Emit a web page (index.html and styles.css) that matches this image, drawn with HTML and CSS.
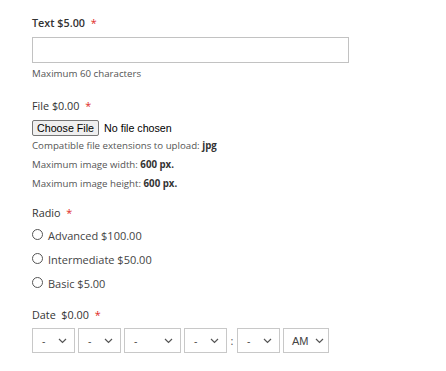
FILE: index.html
```html
<!DOCTYPE html>
<html>
<head>
<meta charset="utf-8">
<link rel="stylesheet" href="styles.css">
</head>
<body>
<div class="form">
  <div class="field">
    <div class="label strong">Text $5.00 <span class="req">*</span></div>
    <div class="input"></div>
    <div class="note">Maximum 60 characters</div>
  </div>

  <div class="field field-file">
    <div class="label">File $0.00 <span class="req">*</span></div>
    <div class="file-row">
      <span class="file-btn">Choose File</span>
      <span class="file-name">No file chosen</span>
    </div>
    <div class="note tall">Compatible file extensions to upload: <b>jpg</b></div>
    <div class="note tall">Maximum image width: <b>600 px.</b></div>
    <div class="note tall">Maximum image height: <b>600 px.</b></div>
  </div>

  <div class="field field-radio">
    <div class="label">Radio <span class="req">*</span></div>
    <div class="options">
      <label class="option"><span class="radio"></span>Advanced $100.00</label>
      <label class="option"><span class="radio"></span>Intermediate $50.00</label>
      <label class="option"><span class="radio"></span>Basic $5.00</label>
    </div>
  </div>

  <div class="field field-date">
    <div class="label">Date&nbsp; $0.00 <span class="req">*</span></div>
    <div class="selects">
      <div class="select w43"><span>-</span><svg width="9" height="6" viewBox="0 0 9 6"><path d="M1 1 L4.5 4.5 L8 1" fill="none" stroke="#555" stroke-width="1.2"/></svg></div>
      <div class="select w43"><span>-</span><svg width="9" height="6" viewBox="0 0 9 6"><path d="M1 1 L4.5 4.5 L8 1" fill="none" stroke="#555" stroke-width="1.2"/></svg></div>
      <div class="select w56"><span>-</span><svg width="9" height="6" viewBox="0 0 9 6"><path d="M1 1 L4.5 4.5 L8 1" fill="none" stroke="#555" stroke-width="1.2"/></svg></div>
      <div class="select w43"><span>-</span><svg width="9" height="6" viewBox="0 0 9 6"><path d="M1 1 L4.5 4.5 L8 1" fill="none" stroke="#555" stroke-width="1.2"/></svg></div>
      <span class="colon">:</span>
      <div class="select w43"><span>-</span><svg width="9" height="6" viewBox="0 0 9 6"><path d="M1 1 L4.5 4.5 L8 1" fill="none" stroke="#555" stroke-width="1.2"/></svg></div>
      <div class="select ampm"><span>AM</span><svg width="9" height="6" viewBox="0 0 9 6"><path d="M1 1 L4.5 4.5 L8 1" fill="none" stroke="#555" stroke-width="1.2"/></svg></div>
    </div>
  </div>
</div>
</body>
</html>
```

FILE: styles.css
```css
html, body {
  margin: 0;
  padding: 0;
  background: #fff;
}
body {
  font-family: "Open Sans", "Noto Sans", sans-serif;
  color: #333;
}
.form {
  padding: 16px 0 0 32px;
  display: flex;
  flex-direction: column;
}
.field {
  display: flex;
  flex-direction: column;
  align-items: flex-start;
}
.label {
  font-size: 10.8px;
  line-height: 14px;
  height: 14px;
  color: #333;
  white-space: nowrap;
}
.label.strong {
  font-weight: 600;
}
.req {
  color: #e02b27;
  margin-left: 3px;
  font-weight: 400;
}
.input {
  margin-top: 7px;
  width: 315px;
  height: 24px;
  border: 1px solid #c2c2c2;
  background: #fff;
}
.note {
  margin-top: 4px;
  font-size: 9.7px;
  line-height: 14px;
  color: #555;
  white-space: nowrap;
}
.note b {
  font-weight: 700;
  color: #333;
}
.note.tall {
  margin-top: 0;
  line-height: 19px;
}
.field-file {
  margin-top: 18px;
}
.file-row {
  margin-top: 7px;
  display: flex;
  align-items: center;
  height: 16px;
}
.file-btn {
  font-family: "Liberation Sans", Arial, sans-serif;
  font-size: 10.7px;
  line-height: 14px;
  color: #000;
  background: #efefef;
  border: 1px solid #767676;
  border-radius: 2px;
  padding: 0 4px;
  height: 14px;
  display: flex;
  align-items: center;
}
.file-name {
  font-family: "Liberation Sans", Arial, sans-serif;
  font-size: 10.7px;
  color: #000;
  margin-left: 5px;
}
.field-radio {
  margin-top: 13px;
}
.options {
  margin-top: 3px;
  display: flex;
  flex-direction: column;
}
.option {
  display: flex;
  align-items: center;
  height: 24px;
  font-size: 11px;
  color: #444;
}
.radio {
  width: 9px;
  height: 9px;
  border: 1px solid #555;
  border-radius: 50%;
  margin-right: 5px;
  margin-top: -1px;
  flex: none;
}
.field-date {
  margin-top: 13px;
}
.field-date .label {
  font-weight: 400;
}
.selects {
  margin-top: 6px;
  display: flex;
  align-items: center;
  gap: 3px;
}
.select {
  box-sizing: border-box;
  height: 25px;
  border: 1px solid #c8c8c8;
  display: flex;
  align-items: center;
  justify-content: space-between;
  padding: 0 7px 0 9px;
  font-size: 10.5px;
  color: #444;
}
.select svg {
  display: block;
}
.w43 { width: 43px; }
.w56 { width: 57px; }
.ampm {
  width: 46px;
  font-family: "Liberation Sans", Arial, sans-serif;
  font-size: 11px;
  padding: 0 4px 0 8px;
}
.colon {
  font-size: 11px;
  color: #555;
  width: 4px;
  text-align: center;
}
```
